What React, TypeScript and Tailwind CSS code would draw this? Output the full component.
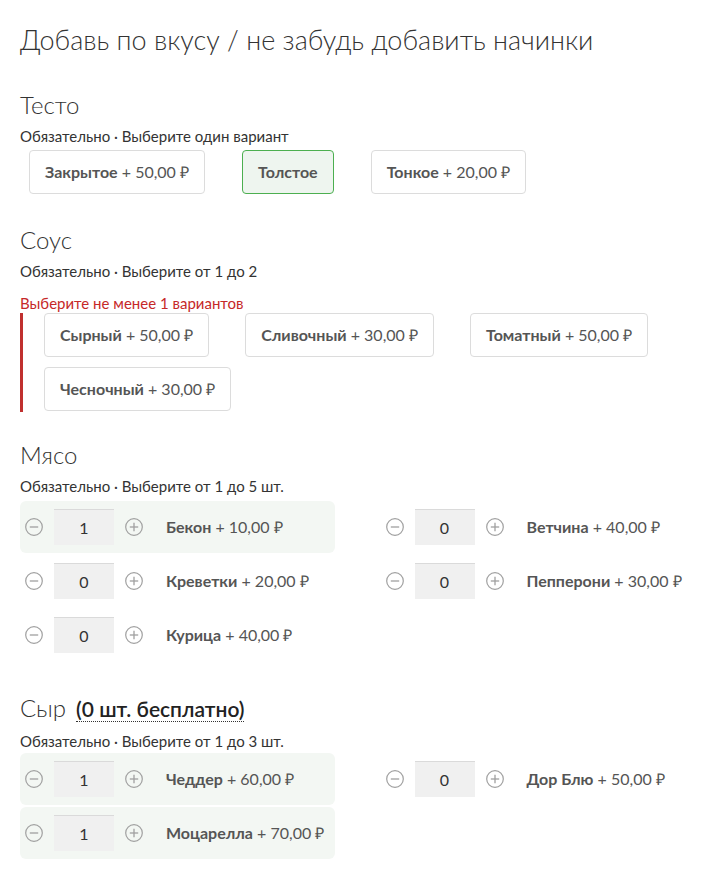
import React from "react";

const Minus = () => (
  <svg width="18" height="18" viewBox="0 0 18 18" className="shrink-0">
    <circle cx="9" cy="9" r="8.3" fill="none" stroke="#a0a0a0" strokeWidth="1.2" />
    <line x1="4.8" y1="9" x2="13.2" y2="9" stroke="#a0a0a0" strokeWidth="1.3" />
  </svg>
);
const Plus = () => (
  <svg width="18" height="18" viewBox="0 0 18 18" className="shrink-0">
    <circle cx="9" cy="9" r="8.3" fill="none" stroke="#a0a0a0" strokeWidth="1.2" />
    <line x1="4.8" y1="9" x2="13.2" y2="9" stroke="#a0a0a0" strokeWidth="1.3" />
    <line x1="9" y1="4.8" x2="9" y2="13.2" stroke="#a0a0a0" strokeWidth="1.3" />
  </svg>
);

type Opt = { name: string; price?: string; selected?: boolean };

const OptButton = ({ o }: { o: Opt }) => (
  <div
    className={
      "h-[44px] px-[15px] flex items-center rounded-[4px] border text-[16px] text-[#555] whitespace-nowrap " +
      (o.selected ? "border-[#4caf50] bg-[#eef5ef]" : "border-[#dcdcdc] bg-white")
    }
  >
    <span className="font-bold">{o.name}</span>
    {o.price && <span>&nbsp;+ {o.price}</span>}
  </div>
);

type Item = { name: string; price: string; qty: number };

const QtyRow = ({ it }: { it: Item }) => (
  <div
    className={
      "h-[52px] flex items-center pl-[5px] rounded-[6px] " + (it.qty > 0 ? "bg-[#f3f7f3]" : "")
    }
  >
    <Minus />
    <div className="ml-[11px] w-[60px] h-[36px] bg-[#f0f0f0] border-t border-[#dadada] flex items-center justify-center text-[16px] text-[#333]">
      {it.qty}
    </div>
    <div className="ml-[11px]">
      <Plus />
    </div>
    <div className="ml-[23px] text-[16px] text-[#555] whitespace-nowrap">
      <span className="font-bold">{it.name}</span>
      <span> + {it.price}</span>
    </div>
  </div>
);

const Heading = ({ children }: { children: React.ReactNode }) => (
  <div className="h-[30px] leading-[30px] text-[24px] font-light text-[#333] flex items-baseline">{children}</div>
);
const Sub = ({ children }: { children: React.ReactNode }) => (
  <div className="h-[20px] leading-[20px] text-[15px] text-[#333]">{children}</div>
);

export default function App() {
  const meat: Item[] = [
    { name: "Бекон", price: "10,00 ₽", qty: 1 },
    { name: "Ветчина", price: "40,00 ₽", qty: 0 },
    { name: "Креветки", price: "20,00 ₽", qty: 0 },
    { name: "Пепперони", price: "30,00 ₽", qty: 0 },
    { name: "Курица", price: "40,00 ₽", qty: 0 },
  ];
  const cheese: Item[] = [
    { name: "Чеддер", price: "60,00 ₽", qty: 1 },
    { name: "Дор Блю", price: "50,00 ₽", qty: 0 },
    { name: "Моцарелла", price: "70,00 ₽", qty: 1 },
  ];
  return (
    <div className="min-h-[870px] bg-white px-5 pt-[20px] font-['Lato',sans-serif] text-[#333]">
      <div className="h-[40px] leading-[40px] text-[27px] font-light text-[#333]">
        Добавь по вкусу / не забудь добавить начинки
      </div>

      <div className="mt-[30px]">
        <Heading>Тесто</Heading>
        <div className="mt-[6px]">
          <Sub>Обязательно · Выберите один вариант</Sub>
        </div>
        <div className="mt-[4px] ml-[9px] flex gap-[37px]">
          <OptButton o={{ name: "Закрытое", price: "50,00 ₽" }} />
          <OptButton o={{ name: "Толстое", selected: true }} />
          <OptButton o={{ name: "Тонкое", price: "20,00 ₽" }} />
        </div>
      </div>

      <div className="mt-[31px]">
        <Heading>Соус</Heading>
        <div className="mt-[6px]">
          <Sub>Обязательно · Выберите от 1 до 2</Sub>
        </div>
        <div className="mt-[12px] h-[20px] leading-[20px] text-[15px] text-[#c62828]">
          Выберите не менее 1 вариантов
        </div>
        <div className="border-l-[3px] border-[#c0302f] pl-[21px] pb-[1px] flex flex-wrap gap-x-[36px] gap-y-[10px]">
          <OptButton o={{ name: "Сырный", price: "50,00 ₽" }} />
          <OptButton o={{ name: "Сливочный", price: "30,00 ₽" }} />
          <OptButton o={{ name: "Томатный", price: "50,00 ₽" }} />
          <OptButton o={{ name: "Чесночный", price: "30,00 ₽" }} />
        </div>
      </div>

      <div className="mt-[28px]">
        <Heading>Мясо</Heading>
        <div className="mt-[6px]">
          <Sub>Обязательно · Выберите от 1 до 5 шт.</Sub>
        </div>
        <div className="mt-[5px] grid grid-cols-2 gap-x-[46px] gap-y-[2px]">
          {meat.map((it) => (
            <QtyRow key={it.name} it={it} />
          ))}
        </div>
      </div>

      <div className="mt-[32px]">
        <Heading>
          <span>Сыр</span>
          <span className="ml-[10px] text-[21px] font-semibold text-[#222] leading-[24px] border-b border-dotted border-[#333]">
            (0 шт. бесплатно)
          </span>
        </Heading>
        <div className="mt-[8px]">
          <Sub>Обязательно · Выберите от 1 до 3 шт.</Sub>
        </div>
        <div className="mt-[2px] grid grid-cols-2 gap-x-[46px] gap-y-[2px]">
          {cheese.map((it) => (
            <QtyRow key={it.name} it={it} />
          ))}
        </div>
      </div>
    </div>
  );
}
